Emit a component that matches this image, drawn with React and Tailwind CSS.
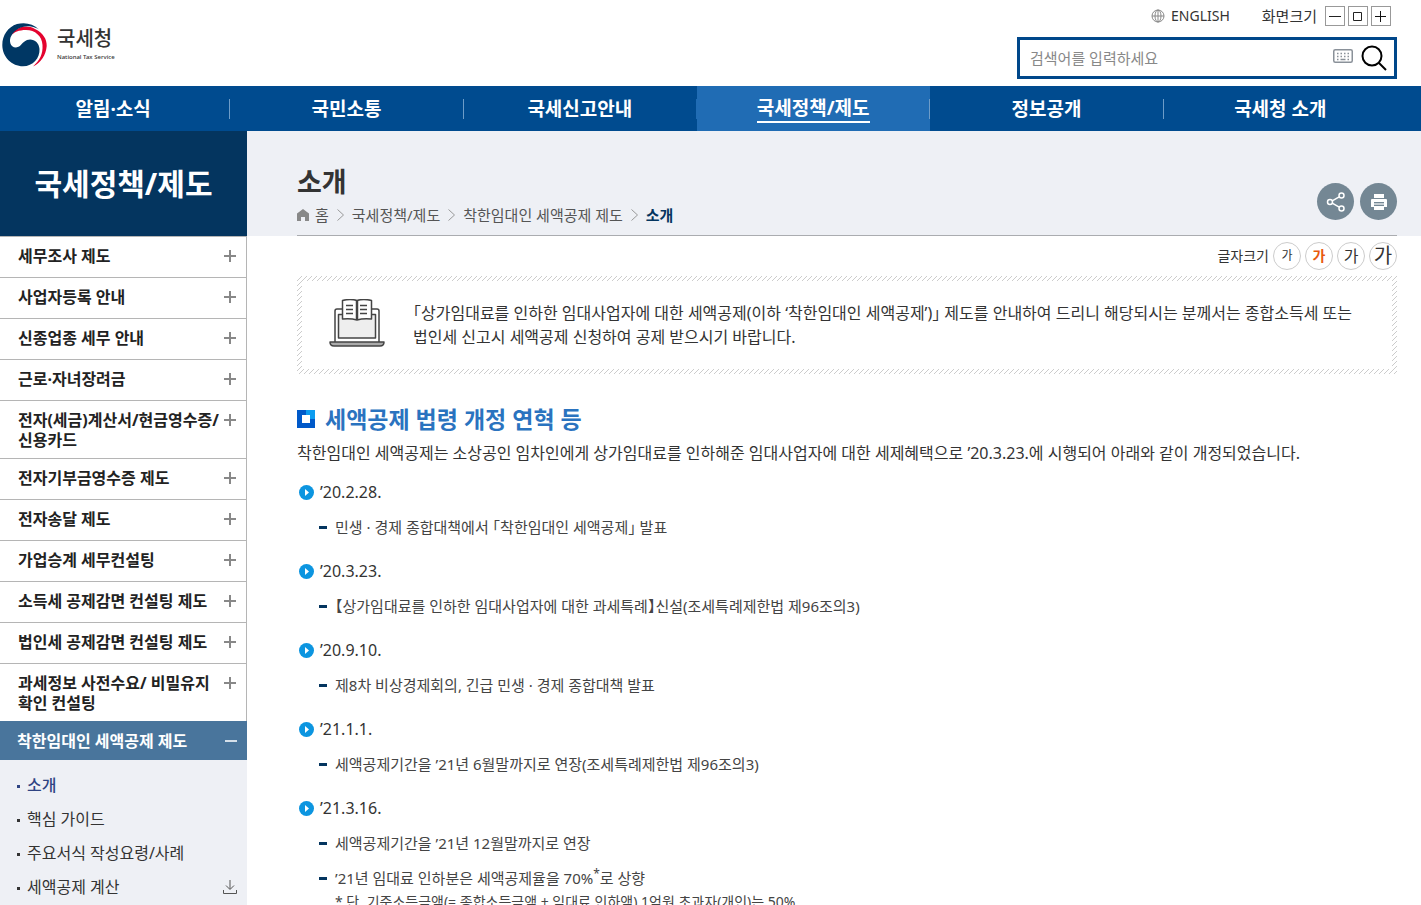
const topMenu = [
  { label: "알림·소식" },
  { label: "국민소통" },
  { label: "국세신고안내" },
  { label: "국세정책/제도", active: true },
  { label: "정보공개" },
  { label: "국세청 소개" },
];

const sideMenu = [
  ["세무조사 제도"],
  ["사업자등록 안내"],
  ["신종업종 세무 안내"],
  ["근로·자녀장려금"],
  ["전자(세금)계산서/현금영수증/", "신용카드"],
  ["전자기부금영수증 제도"],
  ["전자송달 제도"],
  ["가업승계 세무컨설팅"],
  ["소득세 공제감면 컨설팅 제도"],
  ["법인세 공제감면 컨설팅 제도"],
  ["과세정보 사전수요/ 비밀유지", "확인 컨설팅"],
];

const subMenu = [
  { label: "소개", active: true },
  { label: "핵심 가이드" },
  { label: "주요서식 작성요령/사례" },
  { label: "세액공제 계산", download: true },
];

const history = [
  { date: "’20.2.28.", items: ["민생 · 경제 종합대책에서 「착한임대인 세액공제」 발표"] },
  { date: "’20.3.23.", items: ["【상가임대료를 인하한 임대사업자에 대한 과세특례】신설(조세특례제한법 제96조의3)"] },
  { date: "’20.9.10.", items: ["제8차 비상경제회의, 긴급 민생 · 경제 종합대책 발표"] },
  { date: "’21.1.1.", items: ["세액공제기간을 ’21년 6월말까지로 연장(조세특례제한법 제96조의3)"] },
  {
    date: "’21.3.16.",
    items: [
      "세액공제기간을 ’21년 12월말까지로 연장",
      <>
        ’21년 임대료 인하분은 세액공제율을 70%<sup className="text-xs leading-none">*</sup>로 상향
      </>,
    ],
    note: "* 단, 기준소득금액(= 종합소득금액 + 임대료 인하액) 1억원 초과자(개인)는 50%",
  },
];

function Logo() {
  return (
    <a href="#home" className="flex items-center gap-2.5">
      <svg viewBox="0 0 46 46" className="w-[46px] h-[46px]" aria-hidden="true">
        <path fill="#e4032e" d="M9.500 14C14 5 25 2 34 7C42 11 46 17 45.700 24C45 33 40 41 32 44.500C39 38 42 32 41.500 23C41 14 34 8 25 8C18 8 13 10 9.500 14Z" />
        <path fill="#003764" d="M38 7.500C32 1.500 24 0 16 2C7 5 1.300 13 1.300 23C1.300 35 11 44.300 22 44.300C32 44.300 39 36 38.500 27C38 20 32 16 26 18C21 20 20 25 15 25.500C9 25.500 7.500 18 10.500 13.500C14 7 22 3 30 4.500C33 5 36 6 38 7.500Z" />
      </svg>
      <span className="flex flex-col text-[#333] -mt-1">
        <span className="text-xl leading-7 font-medium">국세청</span>
        <span className="text-[6px] leading-2 font-medium whitespace-nowrap">National Tax Service</span>
      </span>
    </a>
  );
}

function Header() {
  return (
    <header className="h-[86px] flex justify-between pr-6">
      <div className="pt-[22px] pl-px">
        <Logo />
      </div>
      <div className="flex flex-col items-end">
        <div className="flex items-center h-8 pr-1.5 text-[15px] text-[#333]">
          <a href="#english" className="flex items-center gap-1.5 mr-8 text-sm">
            <svg viewBox="0 0 14 14" className="w-3.5 h-3.5" fill="none" stroke="#888" aria-hidden="true">
              <circle cx="7" cy="7" r="6" />
              <ellipse cx="7" cy="7" rx="3" ry="6" />
              <path d="M1 7h12M7 1v12" />
            </svg>
            ENGLISH
          </a>
          <span className="mr-2">화면크기</span>
          <div className="flex gap-[3px]">
            <button aria-label="축소" className="w-5 h-5 border border-[#999] grid place-items-center">
              <svg viewBox="0 0 12 12" className="w-3 h-3" stroke="#222" aria-hidden="true">
                <path d="M0 6.500h12" />
              </svg>
            </button>
            <button aria-label="기본 크기" className="w-5 h-5 border border-[#999] grid place-items-center">
              <svg viewBox="0 0 12 12" className="w-3 h-3" fill="none" stroke="#222" aria-hidden="true">
                <path d="M1.500 2.500h8v8h-8z" />
              </svg>
            </button>
            <button aria-label="확대" className="w-5 h-5 border border-[#999] grid place-items-center">
              <svg viewBox="0 0 12 12" className="w-3 h-3" stroke="#111" aria-hidden="true">
                <path d="M0 6.500h11M5.500 1v11" />
              </svg>
            </button>
          </div>
        </div>
        <form className="mt-[5px] w-[380px] h-[42px] border-3 border-[#00478a] flex items-center pl-2.5 pr-[7px]">
          <input
            type="text"
            aria-label="검색어"
            placeholder="검색어를 입력하세요"
            className="flex-1 min-w-0 text-[15px] outline-none placeholder:text-[#888]"
          />
          <button type="button" aria-label="가상 키보드" className="mr-2 mb-1">
            <svg viewBox="0 0 20 14" className="w-5 h-3.5" fill="none" stroke="#8a9199" aria-hidden="true">
              <rect x="0.750" y="0.750" width="18.500" height="12.500" rx="1.500" strokeWidth="1.500" />
              <path strokeWidth="1.500" strokeDasharray="1.500 2" d="M4 4.500h12.500M4 7.500h12.500" />
              <path strokeWidth="1.500" d="M4 10.500h1.500M7.500 10.500h5M14.500 10.500H16" />
            </svg>
          </button>
          <button type="button" aria-label="검색">
            <svg viewBox="0 0 26 26" className="w-[26px] h-[26px]" fill="none" stroke="#000" strokeWidth="2" aria-hidden="true">
              <circle cx="11" cy="11" r="9.500" />
              <path d="M18 18l7 7" />
            </svg>
          </button>
        </form>
      </div>
    </header>
  );
}

function TopNav() {
  return (
    <nav className="bg-[#004b8f]">
      <ul className="grid grid-cols-6 -ml-[3px] mr-6">
        {topMenu.map(({ label, active }, i) => (
          <li key={label} className={active ? "flex items-center bg-[#206cb4]" : "flex items-center"}>
            <a href="#menu" className="flex-1 h-[45px] flex items-center justify-center text-[19px] font-bold text-white">
              <span className={active ? "leading-[26px] border-b-2 border-white" : "leading-[26px]"}>{label}</span>
            </a>
            {i !== 5 && <span className={i === 2 ? "w-px h-5 bg-[#206cb4]" : "w-px h-5 bg-[#6d9cc8]"} />}
          </li>
        ))}
      </ul>
    </nav>
  );
}

function Sidebar() {
  return (
    <aside className="w-[247px] shrink-0 bg-[#eef0f5]">
      <h2 className="h-[105px] bg-[#04355f] text-white text-3xl font-bold flex items-center justify-center">
        국세정책/제도
      </h2>
      <ul className="bg-white border-r border-t border-[#b5b5b5]">
        {sideMenu.map((lines) => (
          <li key={lines[0]} className="border-b border-[#b5b5b5] last:border-b-0">
            <a
              href="#side"
              className="min-h-10 pt-[9px] pb-2 pl-[18px] pr-2.5 flex items-start justify-between text-base leading-5 font-bold text-[#222]"
            >
              <span className="whitespace-nowrap">
                {lines.map((line) => (
                  <span key={line} className="block">{line}</span>
                ))}
              </span>
              <svg viewBox="0 0 12 12" className="w-3 h-3 mt-1 shrink-0" stroke="#888" strokeWidth="2" aria-hidden="true">
                <path d="M0 6h12M6 0v12" />
              </svg>
            </a>
          </li>
        ))}
      </ul>
      <a
        href="#rent"
        className="h-[39px] pl-[17px] pr-2.5 flex items-center justify-between bg-[#49759c] text-white text-base font-bold"
      >
        착한임대인 세액공제 제도
        <span className="w-3 h-0.5 bg-[#d5e0ea]" />
      </a>
      <ul className="pt-2">
        {subMenu.map(({ label, active, download }) => (
          <li key={label}>
            <a
              href="#sub"
              className={
                active
                  ? "h-[34px] pl-[17px] pr-2.5 flex items-center text-base font-medium text-[#2f4483]"
                  : "h-[34px] pl-[17px] pr-2.5 flex items-center text-base text-[#333]"
              }
            >
              <span className="w-[3px] h-[3px] mr-[7px] mt-0.5 bg-current" />
              {label}
              {download && (
                <svg viewBox="0 0 14 14" className="w-3.5 h-3.5 ml-auto" fill="none" stroke="#555" aria-hidden="true">
                  <path d="M7 0v9M3 5.500l4 4 4-4M0.500 10v3.500h13V10" />
                </svg>
              )}
            </a>
          </li>
        ))}
      </ul>
    </aside>
  );
}

function Chevron() {
  return (
    <svg viewBox="0 0 7 12" className="w-[7px] h-3" fill="none" stroke="#999" aria-hidden="true">
      <path d="M0.500 0.500l6 5.500-6 5.500" />
    </svg>
  );
}

function PageTitle() {
  return (
    <div className="h-[105px] bg-[#eef0f5] pl-[50px] pr-6">
      <div className="h-full border-b border-[#aaacb0] flex justify-between">
        <div className="pt-[31px]">
          <h1 className="text-[27px] leading-10 font-bold text-[#333]">소개</h1>
          <nav className="flex items-center gap-2 pt-0.5 text-[15px] text-[#555]">
            <a href="#home" className="flex items-center gap-1.5">
              <svg viewBox="0 0 12 12" className="w-3 h-3" fill="#888" aria-hidden="true">
                <path d="M6 0l6 4.500V12H8V8H4v4H0V4.500z" />
              </svg>
              홈
            </a>
            <Chevron />
            <a href="#policy">국세정책/제도</a>
            <Chevron />
            <a href="#rent">착한임대인 세액공제 제도</a>
            <Chevron />
            <span className="font-bold text-[#04355f]">소개</span>
          </nav>
        </div>
        <div className="flex gap-1.5 pt-[52px]">
          <button aria-label="공유" className="w-[37px] h-[37px] rounded-full bg-[#748794] grid place-items-center">
            <svg viewBox="0 0 20 20" className="w-5 h-5" fill="none" stroke="#fff" strokeWidth="1.500" aria-hidden="true">
              <circle cx="4" cy="10" r="2.500" />
              <circle cx="15.500" cy="3.500" r="2.500" />
              <circle cx="15.500" cy="16.500" r="2.500" />
              <path d="M6.200 8.800l7-4M6.200 11.200l7 4" />
            </svg>
          </button>
          <button aria-label="인쇄" className="w-[37px] h-[37px] rounded-full bg-[#748794] grid place-items-center">
            <svg viewBox="0 0 16 16" className="w-4 h-4" fill="#fff" aria-hidden="true">
              <path d="M3 0h10v4H3zM1 5h14a1 1 0 0 1 1 1v7h-3V8H3v5H0V6a1 1 0 0 1 1-1z" />
              <path d="M3 9h10v2H3z" opacity="0.6" />
              <path d="M3 12h10v4H3z" />
            </svg>
          </button>
        </div>
      </div>
    </div>
  );
}

function FontSizeBar() {
  const button = "w-7 h-7 rounded-full border border-[#ccc] flex items-center justify-center ";
  return (
    <div className="flex items-center justify-end gap-1 h-10 text-sm text-[#333]">
      <span>글자크기</span>
      <button className={button + "text-xs"}>가</button>
      <button className={button + "text-sm font-bold text-[#e8590c]"}>가</button>
      <button className={button + "text-base"}>가</button>
      <button className={button + "text-xl"}>가</button>
    </div>
  );
}

function Notice() {
  return (
    <div className="p-[5px] bg-[linear-gradient(135deg,transparent_42%,#ccc_42%,#ccc_58%,transparent_58%)] bg-[length:5px_5px]">
      <div className="min-h-[88px] bg-white flex items-center pl-[27px] pr-6">
        <svg viewBox="0 0 56 48" className="w-14 h-12 mr-7 mb-1 shrink-0" fill="#fff" stroke="#444" strokeWidth="1.500" strokeLinejoin="round" aria-hidden="true">
          <path d="M6 43V12q0-2 2-2h40q2 0 2 2v31" />
          <path fill="#eee" d="M9.500 15.500h37V39h-37z" />
          <path d="M1 43h54q0 4-4 4H5q-4 0-4-4z" fill="#aaa" />
          <path d="M13.500 1.500q8-2 14.500 0 6.500-2 14.500 0V20q-8-1-14.500 1-6.500-2-14.500-1z" />
          <path d="M28 2V21" strokeWidth="2.500" />
          <path d="M17 6.500h7M17 10.500h7M17 14.500h7M31 6.500h7M31 10.500h7M31 14.500h7" />
        </svg>
        <p className="text-base leading-6 text-[#333]">
          「상가임대료를 인하한 임대사업자에 대한 세액공제(이하 ‘착한임대인 세액공제’)」 제도를 안내하여 드리니 해당되시는 분께서는 종합소득세 또는
          <br />
          법인세 신고시 세액공제 신청하여 공제 받으시기 바랍니다.
        </p>
      </div>
    </div>
  );
}

function HistoryList() {
  return (
    <ul>
      {history.map(({ date, items, note }) => (
        <li key={date} className="pl-0.5">
          <h4 className="flex items-center gap-1.5 h-9 text-base text-[#333]">
            <svg viewBox="0 0 15 15" className="w-[15px] h-[15px]" aria-hidden="true">
              <circle cx="7.500" cy="7.500" r="7.500" fill="#0c95e0" />
              <path d="M6 4l4 3.500L6 11z" fill="#fff" />
            </svg>
            {date}
          </h4>
          <ul className="pl-5 pb-2 text-[15px] text-[#444]">
            {items.map((item, i) => (
              <li key={i} className="flex items-center gap-2 h-[35px] whitespace-nowrap">
                <span className="w-2 h-[3px] bg-[#04355f]" />
                <span>{item}</span>
              </li>
            ))}
            {note && <li className="pl-4 -mt-1 text-sm whitespace-nowrap">{note}</li>}
          </ul>
        </li>
      ))}
    </ul>
  );
}

export default function App() {
  return (
    <div className="h-screen flex flex-col overflow-hidden bg-white font-['Noto_Sans','Noto_Sans_CJK_KR',sans-serif] [font-feature-settings:'halt']">
      <Header />
      <TopNav />
      <div className="flex flex-1 min-h-0">
        <Sidebar />
        <main className="flex-1 min-w-0">
          <PageTitle />
          <div className="pl-[50px] pr-6">
            <FontSizeBar />
            <Notice />
            <h3 className="mt-[27px] flex items-center gap-2.5 text-[23px] leading-9 font-bold text-[#2a73bf]">
              <svg viewBox="0 0 18 18" className="w-[18px] h-[18px]" aria-hidden="true">
                <path fill="#0059c9" d="M0 0h18v18H0z" />
                <path fill="#0c9cf0" d="M9 0h9v9H9z" />
                <path fill="#fff" d="M5 5h8v8H5z" />
              </svg>
              세액공제 법령 개정 연혁 등
            </h3>
            <p className="pb-[5px] text-base leading-8 text-[#333]">
              착한임대인 세액공제는 소상공인 임차인에게 상가임대료를 인하해준 임대사업자에 대한 세제혜택으로 ’20.3.23.에 시행되어 아래와 같이 개정되었습니다.
            </p>
            <HistoryList />
          </div>
        </main>
      </div>
    </div>
  );
}
